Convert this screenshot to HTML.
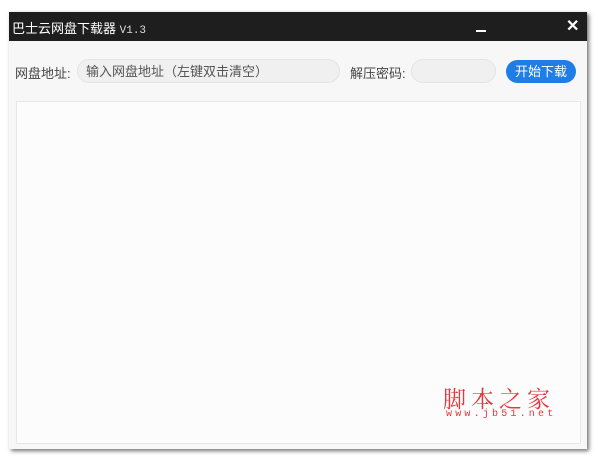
<!DOCTYPE html>
<html><head><meta charset="utf-8"><style>
body{margin:0;width:600px;height:461px;background:#fff;position:relative;overflow:hidden;font-family:"Liberation Sans","Noto Sans CJK SC",sans-serif;}
.win{position:absolute;left:9px;top:12px;width:578px;height:437px;background:#f7f7f7;box-shadow:2px 2px 4px rgba(0,0,0,.55);}
.tb{position:absolute;left:0;top:0;width:578px;height:29px;background:#1e1e1e;color:#fff;font-size:13px;}
.tb .t{position:absolute;left:3px;top:6px;}
.tb .v{font-family:"Liberation Mono",monospace;font-size:11px;color:#ddd;}
.min{position:absolute;left:467px;top:18px;width:10px;height:2px;background:#fff;}
.x{position:absolute;left:557px;top:4px;font-size:16px;font-weight:bold;color:#fff;}
.lab{position:absolute;top:51px;font-size:13px;color:#444;}
.in{position:absolute;top:47px;height:24px;border-radius:12px;background:#f0f0f0;border:1px solid #e4e4e4;font-size:13px;color:#555;line-height:24px;box-sizing:border-box;}
.btn{position:absolute;left:497px;top:48px;width:70px;height:23px;border-radius:12px;background:#1e7ee6;color:#fff;font-size:13px;text-align:center;line-height:23px;}
.box{position:absolute;left:7px;top:89px;width:563px;height:341px;background:#fcfcfc;border:1px solid #e8e8e8;}
.wm{position:absolute;left:443px;top:381px;color:#e8353b;font-size:23px;letter-spacing:5px;font-family:"Noto Serif CJK SC",serif;}
.wm2{position:absolute;left:446px;top:409px;color:#e8353b;font-size:10px;letter-spacing:3.2px;font-family:"Liberation Mono",monospace;}
</style></head><body>
<div class="win">
<div class="tb"><span class="t">巴士云网盘下载器 <span class="v">V1.3</span></span><div class="min"></div><div class="x">✕</div></div>
<div class="lab" style="left:6px">网盘地址:</div>
<div class="in" style="left:68px;width:263px;padding-left:8px">输入网盘地址（左键双击清空）</div>
<div class="lab" style="left:341px">解压密码:</div>
<div class="in" style="left:402px;width:85px"></div>
<div class="btn">开始下载</div>
<div class="box"></div>
</div>
<div class="wm">脚本之家</div>
<div class="wm2">www.jb51.net</div>
</body></html>
